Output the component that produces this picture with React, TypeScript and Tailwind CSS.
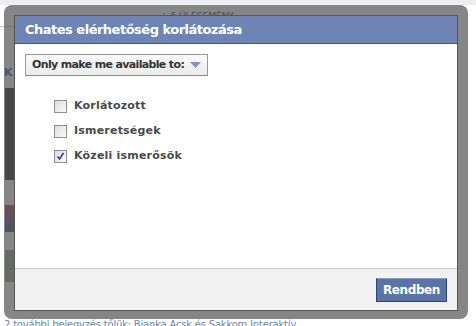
import { useState } from "react";

const options = [
  { label: "Korlátozott", checked: false },
  { label: "Ismeretségek", checked: false },
  { label: "Közeli ismerősök", checked: true },
];

function CheckRow({ label, checked }: { label: string; checked: boolean }) {
  return (
    <label className="flex items-center gap-[7px] h-[13px]">
      <span className="w-[13px] h-[13px] border border-[#8f8f8f] bg-gradient-to-br from-[#dcdcdc] to-[#fbfbfb] flex items-center justify-center">
        {checked && (
          <svg width="9" height="9" viewBox="0 0 9 9">
            <path d="M1.5 4.5 L3.5 7 L7.5 1" fill="none" stroke="#2b3f8f" strokeWidth="1.6" />
          </svg>
        )}
      </span>
      <span className="text-[11px] font-bold text-[#4a4a4a] tracking-[0.2px]">{label}</span>
    </label>
  );
}

export default function App() {
  const [items] = useState(options);

  return (
    <div
      className="relative w-[476px] h-[326px] overflow-hidden bg-white"
      style={{ fontFamily: '"DejaVu Sans", Tahoma, sans-serif' }}
    >
      {/* page behind the dialog */}
      <div className="h-[5px] bg-[#eceef3]" />
      <div className="flex">
        <div className="w-[14px] flex flex-col">
          <div className="h-[22px] border-b border-[#c9c9c9]" />
          <div className="h-[61px] text-[11px] font-bold text-[#3b5998] pt-[38px] pl-[4px]">K</div>
          <div className="h-[92px] ml-[5px] bg-[#2a2a2a]" />
          <div className="h-[25px]" />
          <div className="h-[27px] ml-[5px] bg-gradient-to-b from-[#b04050] to-[#3050a0]" />
          <div className="h-[18px]" />
          <div className="h-[32px] ml-[5px] bg-[#9aa090]" />
        </div>
        <div className="flex-1 pl-[146px] pt-[5px] text-[9px] text-[#333]">+ 6 ÚJ ESEMÉNY</div>
      </div>
      <div className="absolute left-[4px] top-[317px] text-[10px] text-[#6d84b4] whitespace-nowrap tracking-[-0.2px]">
        2 további bejegyzés tőlük: Bianka Acsk és Sakkom Interaktív
      </div>

      {/* dialog */}
      <div className="absolute left-[4px] top-[5px] w-[464px] rounded-[8px] bg-[rgba(82,82,82,0.7)] p-[10px] pb-[8px]">
        <div className="bg-white border border-[#555] border-t-[#3b5998]">
          <div className="h-[28px] bg-[#6d84b4] border-b border-[#3b5998] px-[10px] flex items-center">
            <span className="text-white font-bold text-[13px] tracking-[-0.5px]">
              Chates elérhetőség korlátozása
            </span>
          </div>
          <div className="h-[224px] px-[10px] pt-[10px]">
            <button className="h-[22px] px-[6px] flex items-center gap-[6px] border border-[#999] border-b-[#888] bg-gradient-to-b from-[#f9f9f9] to-[#ececec]">
              <span className="text-[11px] font-bold text-[#333] tracking-[-0.65px]">Only make me available to:</span>
              <svg width="11" height="6" viewBox="0 0 11 6">
                <path d="M0 0 L11 0 L5.5 6 Z" fill="#7f93bc" />
              </svg>
            </button>
            <div className="mt-[24px] ml-[29px] flex flex-col gap-[12px]">
              {items.map((o) => (
                <CheckRow key={o.label} label={o.label} checked={o.checked} />
              ))}
            </div>
          </div>
          <div className="h-[42px] bg-[#f2f2f2] border-t border-[#ccc] flex items-center justify-end px-[10px]">
            <button className="h-[24px] px-[6px] bg-[#5b74a8] border border-[#29447e] border-t-[#8a9cc2] text-white font-bold text-[12px] tracking-[-0.4px]">
              Rendben
            </button>
          </div>
        </div>
      </div>
    </div>
  );
}
